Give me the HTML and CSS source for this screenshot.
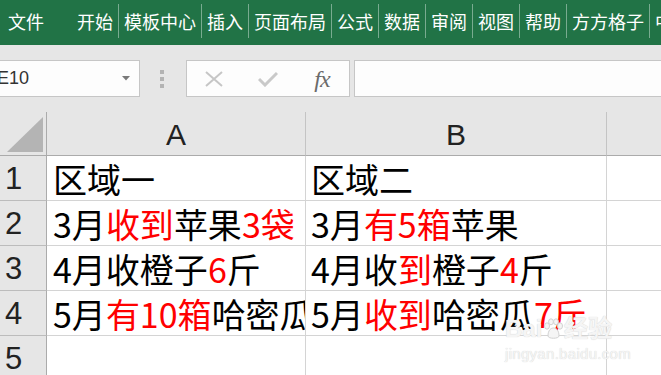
FILE: index.html
```html
<!DOCTYPE html>
<html lang="zh-CN">
<head>
    <meta charset="UTF-8">
    <title>Excel</title>
    <link rel="stylesheet" href="styles.css">
</head>
<body>
    <div class="ribbon">
        <span class="tab tab-file">文件</span>
        <span class="tab">开始</span><i class="sep"></i>
        <span class="tab">模板中心</span><i class="sep"></i>
        <span class="tab">插入</span><i class="sep"></i>
        <span class="tab">页面布局</span><i class="sep"></i>
        <span class="tab">公式</span><i class="sep"></i>
        <span class="tab">数据</span><i class="sep"></i>
        <span class="tab">审阅</span><i class="sep"></i>
        <span class="tab">视图</span><i class="sep"></i>
        <span class="tab">帮助</span><i class="sep"></i>
        <span class="tab">方方格子</span><i class="sep"></i>
        <span class="tab">中</span>
    </div>

    <div class="formula-bar">
        <div class="name-box">
            <span>E10</span>
            <svg width="8" height="5" viewBox="0 0 8 5"><polygon points="0,0 8,0 4,4.5" fill="#7a7a7a"/></svg>
        </div>
        <div class="grip"><i></i><i></i><i></i></div>
        <div class="fx-buttons">
            <span class="fx-btn">
                <svg width="18" height="16" viewBox="0 0 18 16"><path d="M1 1 L17 15 M17 1 L1 15" stroke="#c6c6c6" stroke-width="2" fill="none"/></svg>
            </span>
            <span class="fx-btn">
                <svg width="20" height="16" viewBox="0 0 20 16"><path d="M1 8 L7 14 L19 2" stroke="#c9c9c9" stroke-width="3" fill="none"/></svg>
            </span>
            <span class="fx-btn fx-text">fx</span>
        </div>
        <div class="formula-input"></div>
    </div>

    <div class="sheet">
        <div class="corner">
            <svg width="46" height="43" viewBox="0 0 46 43"><polygon points="7,40 43,5 43,40" fill="#b4b4b4"/></svg>
        </div>
        <div class="col-head">A</div>
        <div class="col-head">B</div>
        <div class="col-head last"></div>

        <div class="row-head">1</div>
        <div class="cell">区域一</div>
        <div class="cell col-b">区域二</div>
        <div class="cell last"></div>

        <div class="row-head">2</div>
        <div class="cell">3月<span class="hl">收到</span>苹果<span class="hl">3袋</span></div>
        <div class="cell col-b">3月<span class="hl">有5箱</span>苹果</div>
        <div class="cell last"></div>

        <div class="row-head">3</div>
        <div class="cell">4月收橙子<span class="hl">6</span>斤</div>
        <div class="cell col-b">4月收<span class="hl">到</span>橙子<span class="hl">4</span>斤</div>
        <div class="cell last"></div>

        <div class="row-head">4</div>
        <div class="cell">5月<span class="hl">有10箱</span>哈密瓜</div>
        <div class="cell col-b">5月<span class="hl">收到</span>哈密瓜<span class="hl">7斤</span></div>
        <div class="cell last"></div>

        <div class="row-head">5</div>
        <div class="cell"></div>
        <div class="cell col-b"></div>
        <div class="cell last"></div>
    </div>

    <div class="watermark">
        <div class="wm-logo">Bai<svg width="22" height="22" viewBox="0 0 22 22"><g fill="#f5f5f5" stroke="#d2d2d2" stroke-width="1"><ellipse cx="5" cy="8" rx="2.5" ry="3.2"/><ellipse cx="9" cy="3.8" rx="2.4" ry="3"/><ellipse cx="14" cy="3.8" rx="2.4" ry="3"/><ellipse cx="18" cy="8" rx="2.5" ry="3.2"/><path d="M6 18 C6 12 9 10 11.5 10 C14 10 17 12 17 18 C17 21 6 21 6 18 Z"/></g></svg>经验</div>
        <div class="wm-url">jingyan.baidu.com</div>
    </div>
</body>
</html>
```

FILE: styles.css
```css
body {
    margin: 0;
    width: 661px;
    height: 375px;
    overflow: hidden;
    background-color: #e6e6e6;
    font-family: "Noto Sans CJK SC", "Noto Sans", sans-serif;
    position: relative;
}

/* ribbon */
.ribbon {
    height: 45px;
    background-color: #217346;
    color: #fff;
    font-size: 18px;
    display: flex;
    align-items: flex-start;
    white-space: nowrap;
    overflow: hidden;
}

.tab {
    line-height: 24px;
    margin-top: 9px;
    padding: 0 5px;
}

.tab-file {
    padding: 0 28px 0 8px;
}

.sep {
    flex: none;
    width: 1px;
    height: 34px;
    margin-top: 4px;
    background-color: rgba(255, 255, 255, 0.4);
}

/* formula bar */
.formula-bar {
    height: 67px;
    box-sizing: border-box;
    padding-top: 15px;
    display: flex;
    align-items: flex-start;
}

.name-box {
    flex: none;
    margin-left: -8px;
    width: 148px;
    height: 37px;
    box-sizing: border-box;
    background-color: #fdfdfd;
    border: 1px solid #c6c6c6;
    padding: 0 9px 0 4px;
    display: flex;
    align-items: center;
    justify-content: space-between;
    font-family: "Liberation Sans", Arial, sans-serif;
    font-size: 18px;
    color: #333;
}

.grip {
    flex: none;
    margin: 10px 0 0 20px;
    width: 4px;
    display: flex;
    flex-direction: column;
    gap: 3px;
}

.grip i {
    display: block;
    width: 4px;
    height: 4px;
    background-color: #b3b3b3;
}

.fx-buttons {
    flex: none;
    margin-left: 22px;
    width: 164px;
    height: 37px;
    box-sizing: border-box;
    background-color: #fdfdfd;
    border: 1px solid #c6c6c6;
    display: flex;
    align-items: center;
}

.fx-btn {
    width: 54px;
    display: flex;
    justify-content: center;
    align-items: center;
}

.fx-text {
    font-family: "Liberation Serif", "DejaVu Serif", serif;
    font-style: italic;
    font-size: 24px;
    color: #6b6b6b;
    line-height: 30px;
    letter-spacing: -1px;
}

.formula-input {
    flex: 1;
    margin: 0 -10px 0 4px;
    height: 37px;
    box-sizing: border-box;
    background-color: #fdfdfd;
    border: 1px solid #c6c6c6;
}

/* sheet */
.sheet {
    display: grid;
    grid-template-columns: 47px 259px 301px 54px;
    grid-template-rows: 44px;
    grid-auto-rows: 45px;
}

.sheet > div {
    box-sizing: border-box;
    overflow: hidden;
    white-space: nowrap;
}

.corner {
    background-color: #e6e6e6;
    border-right: 1px solid #ababab;
    border-bottom: 1px solid #ababab;
}

.corner svg {
    display: block;
}

.col-head {
    background-color: #e6e6e6;
    border-right: 1px solid #c4c4c4;
    border-bottom: 1px solid #ababab;
    text-align: center;
    font-family: "Liberation Sans", Arial, sans-serif;
    font-size: 30px;
    line-height: 46px;
    color: #222;
}

.row-head {
    background-color: #e6e6e6;
    border-right: 1px solid #ababab;
    border-bottom: 1px solid #bcbcbc;
    padding-left: 5px;
    font-family: "Liberation Sans", Arial, sans-serif;
    font-size: 31px;
    line-height: 46px;
    color: #222;
}

.cell {
    background-color: #fff;
    border-right: 1px solid #d4d4d4;
    border-bottom: 1px solid #d4d4d4;
    padding-left: 6px;
    font-size: 34px;
    line-height: 46px;
    color: #000;
}

.col-b {
    padding-left: 5px;
}

.last {
    border-right: none;
}

.hl {
    color: #ff0000;
}

/* watermark over the grid */
.watermark {
    position: absolute;
    left: 505px;
    top: 315px;
    color: #f5f5f5;
    text-shadow: 0 0 1px #c8c8c8;
}

.wm-logo {
    display: flex;
    align-items: center;
    font-family: "Liberation Sans", Arial, sans-serif;
    font-weight: bold;
    font-size: 24px;
    line-height: 28px;
}

.wm-url {
    margin-top: 3px;
    font-family: "Liberation Sans", Arial, sans-serif;
    font-size: 15px;
    line-height: 16px;
    letter-spacing: 0.3px;
}
```
